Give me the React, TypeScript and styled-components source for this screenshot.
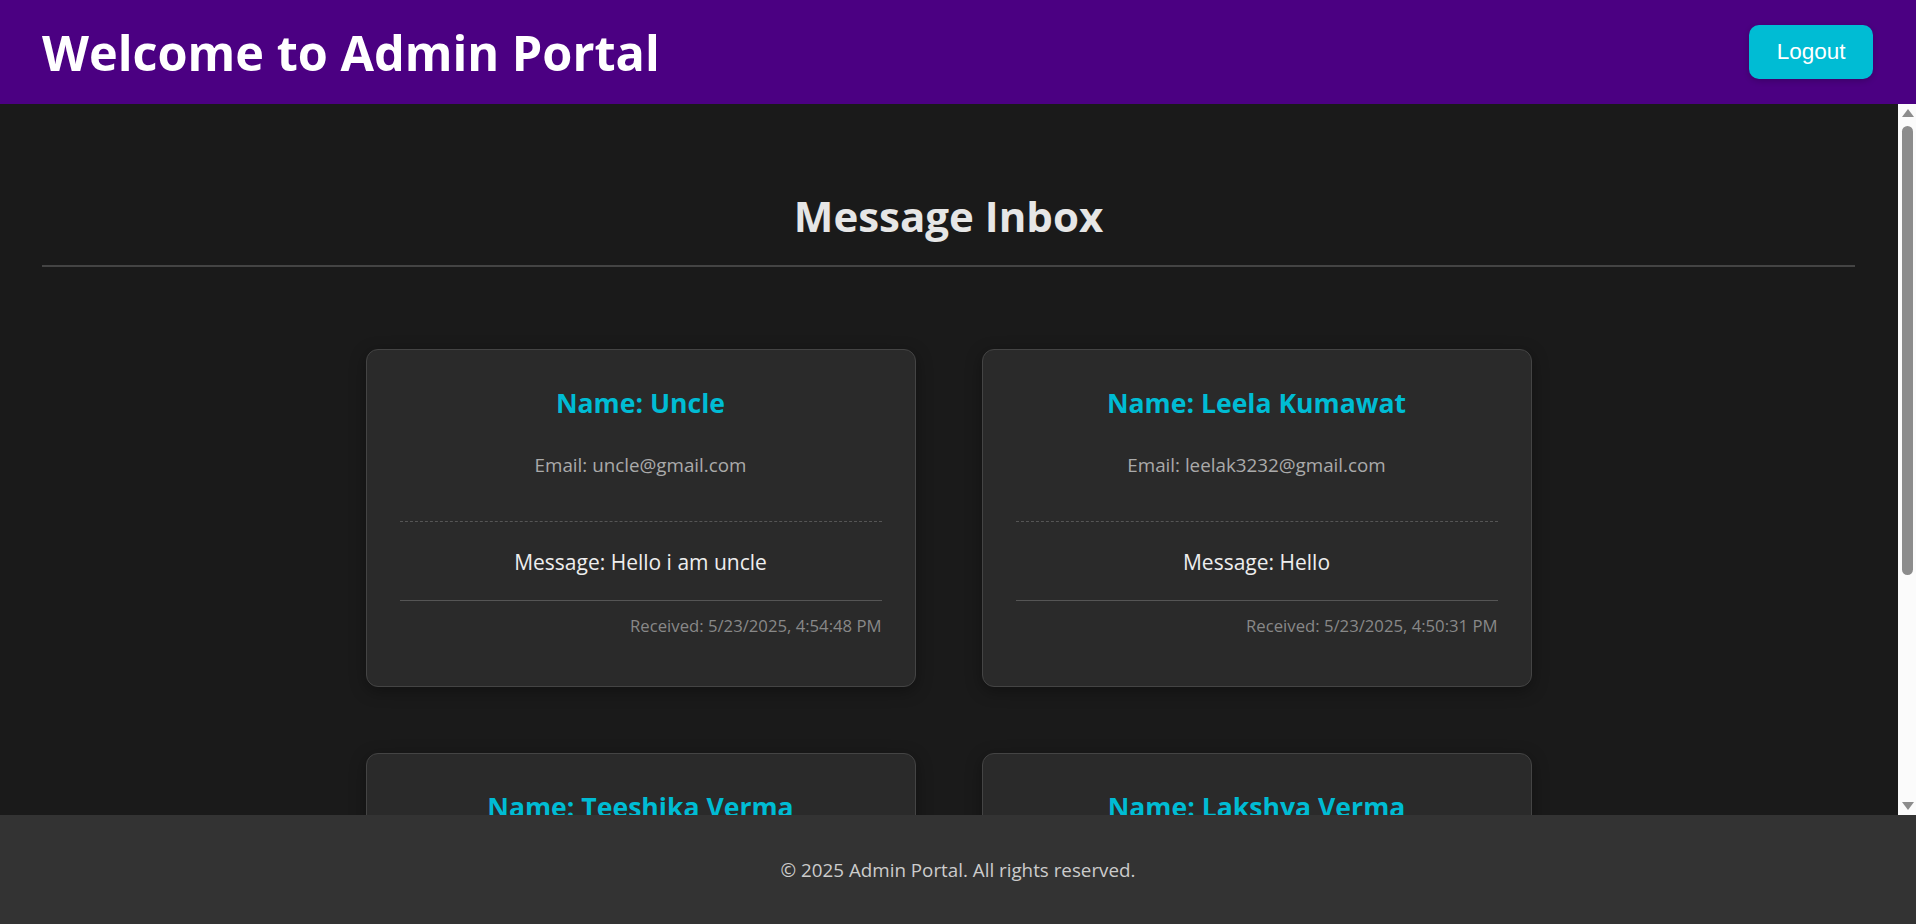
import { FC } from 'react';
import styled, { createGlobalStyle } from 'styled-components';

interface MessageI {
  name: string;
  email: string;
  message: string;
  received: string;
}

const messages: MessageI[] = [
  {
    name: 'Uncle',
    email: 'uncle@gmail.com',
    message: 'Hello i am uncle',
    received: '5/23/2025, 4:54:48 PM'
  },
  {
    name: 'Leela Kumawat',
    email: 'leelak3232@gmail.com',
    message: 'Hello',
    received: '5/23/2025, 4:50:31 PM'
  },
  {
    name: 'Teeshika Verma',
    email: 'teeshika@gmail.com',
    message: 'Hi there',
    received: '5/23/2025, 4:41:12 PM'
  },
  {
    name: 'Lakshya Verma',
    email: 'lakshya@gmail.com',
    message: 'Hello admin',
    received: '5/23/2025, 4:38:05 PM'
  }
];

const MessageCard: FC<{ item: MessageI }> = ({ item }) => (
  <Card>
    <CardName>Name: {item.name}</CardName>
    <CardEmail>Email: {item.email}</CardEmail>
    <Divider $dashed />
    <CardMessage>Message: {item.message}</CardMessage>
    <Divider />
    <CardDate>Received: {item.received}</CardDate>
  </Card>
);

// classic light scrollbar of the inbox pane
const ScrollBar: FC = () => (
  <Track>
    <ArrowButton>
      <Arrow $up />
    </ArrowButton>
    <Thumb />
    <TrackRest />
    <ArrowButton>
      <Arrow />
    </ArrowButton>
  </Track>
);

const App: FC = () => (
  <>
    <GlobalStyle />
    <Page>
      <Header>
        <Title>Welcome to Admin Portal</Title>
        <LogoutButton>Logout</LogoutButton>
      </Header>
      <Main>
        <Content>
          <Heading>Message Inbox</Heading>
          <Rule />
          <CardGrid>
            {messages.map((m) => (
              <MessageCard key={m.email} item={m} />
            ))}
          </CardGrid>
        </Content>
        <ScrollBar />
      </Main>
      <Footer>© 2025 Admin Portal. All rights reserved.</Footer>
    </Page>
  </>
);

const GlobalStyle = createGlobalStyle`
  html, body {
    margin: 0;
    padding: 0;
    height: 100%;
  }
  body {
    overflow: hidden;
    background: #111111;
    font-family: 'Open Sans', 'Noto Sans', sans-serif;
  }
`;

const Page = styled.div`
  display: flex;
  flex-direction: column;
  height: 100vh;
`;

const Header = styled.header`
  display: flex;
  align-items: center;
  justify-content: space-between;
  flex-shrink: 0;
  height: 104px;
  padding: 0 43px 0 42px;
  box-sizing: border-box;
  background: #4b0082;
`;

const Title = styled.h1`
  margin: 0;
  font-size: 48.6px;
  line-height: 1.2;
  font-weight: 700;
  color: #ffffff;
`;

const LogoutButton = styled.button`
  height: 54px;
  padding: 0 27.5px;
  border: none;
  border-radius: 10px;
  background: #00bcd4;
  color: #ffffff;
  font-family: 'Liberation Sans', Arial, sans-serif;
  font-size: 22.5px;
  box-shadow: 0 2px 6px rgba(0, 0, 0, 0.2);
  cursor: pointer;
`;

const Main = styled.main`
  display: flex;
  flex: 1;
  min-height: 0;
  background: #1a1a1a;
`;

const Content = styled.div`
  flex: 1;
  overflow-y: auto;
  scrollbar-width: none;
  padding: 87px 43px 60px 42px;
  box-sizing: border-box;
`;

const Track = styled.div`
  display: flex;
  flex-direction: column;
  width: 18px;
  flex-shrink: 0;
  background: #fbfbfb;
`;

const ArrowButton = styled.div`
  display: flex;
  align-items: center;
  justify-content: center;
  height: 18px;
  flex-shrink: 0;
`;

const Arrow = styled.div<{ $up?: boolean }>`
  width: 0;
  height: 0;
  margin-left: 1px;
  border-left: 6px solid transparent;
  border-right: 6px solid transparent;
  ${({ $up }) => ($up ? 'border-bottom: 8px solid #8c8c8c;' : 'border-top: 8px solid #8c8c8c;')}
`;

const Thumb = styled.div`
  height: 449px;
  margin: 4px 3px 0 4px;
  border-radius: 6px;
  background: #8c8c8c;
  flex-shrink: 0;
`;

const TrackRest = styled.div`
  flex: 1;
`;

const Heading = styled.h2`
  margin: 0;
  text-align: center;
  font-size: 42px;
  line-height: 1.2;
  font-weight: 700;
  color: #e6e6e6;
`;

const Rule = styled.div`
  height: 2px;
  margin: 24px 0 82px;
  background: #444444;
`;

const CardGrid = styled.div`
  display: grid;
  grid-template-columns: repeat(2, 550px);
  justify-content: center;
  gap: 66px;
`;

const Card = styled.div`
  box-sizing: border-box;
  padding: 38px 33px 50px;
  border: 1px solid #444444;
  border-radius: 12px;
  background: #2a2a2a;
  box-shadow: 0 4px 16px rgba(0, 0, 0, 0.35);
  text-align: center;
`;

const CardName = styled.h3`
  margin: 0;
  font-size: 26.6px;
  line-height: 1.2;
  font-weight: 700;
  color: #00bcd4;
`;

const CardEmail = styled.p`
  margin: 34px 0 44px;
  font-size: 18.8px;
  line-height: 1.2;
  color: #aaaaaa;
`;

const Divider = styled.div<{ $dashed?: boolean }>`
  border-top: 1px ${({ $dashed }) => ($dashed ? 'dashed' : 'solid')} #555555;
`;

const CardMessage = styled.p`
  margin: 28px 0 25px;
  font-size: 21px;
  line-height: 1.2;
  color: #eeeeee;
`;

const CardDate = styled.p`
  margin: 15px 0 0;
  text-align: right;
  font-size: 16.7px;
  line-height: 1.2;
  color: #888888;
`;

const Footer = styled.footer`
  display: flex;
  align-items: center;
  justify-content: center;
  flex-shrink: 0;
  height: 109px;
  background: #333333;
  color: #cccccc;
  font-size: 18.8px;
`;

export default App;
